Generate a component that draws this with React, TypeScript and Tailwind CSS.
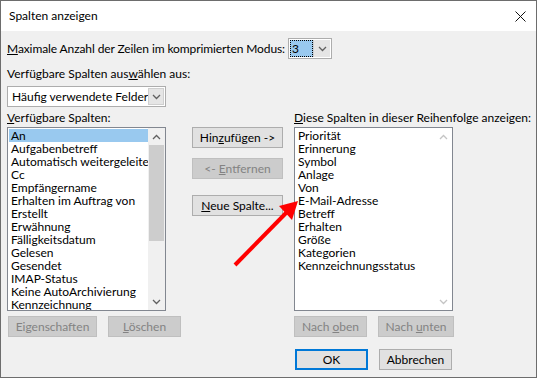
import React from "react";

const font = { fontFamily: 'Lato, "Noto Sans", sans-serif' };

function Chevron({ up = false, color = "#606060" }: { up?: boolean; color?: string }) {
  return (
    <svg width="9" height="6" viewBox="0 0 9 6">
      <path
        d={up ? "M1 5 L4.5 1.5 L8 5" : "M1 1 L4.5 4.5 L8 1"}
        fill="none"
        stroke={color}
        strokeWidth="1.3"
      />
    </svg>
  );
}

function Btn({
  children,
  w,
  disabled = false,
  focused = false,
}: {
  children: React.ReactNode;
  w: string;
  disabled?: boolean;
  focused?: boolean;
}) {
  const base = "h-[21px] flex items-center justify-center text-[12px] leading-none";
  const look = disabled
    ? "bg-[#cccccc] border border-[#bfbfbf] text-[#838383]"
    : focused
    ? "bg-[#e1e1e1] border-2 border-[#0078d7] text-black"
    : "bg-[#e1e1e1] border border-[#adadad] text-black";
  return (
    <div className={`${base} ${look} ${w}`}>
      <span className="whitespace-pre">{children}</span>
    </div>
  );
}

const leftItems = [
  "An",
  "Aufgabenbetreff",
  "Automatisch weitergeleitet",
  "Cc",
  "Empfängername",
  "Erhalten im Auftrag von",
  "Erstellt",
  "Erwähnung",
  "Fälligkeitsdatum",
  "Gelesen",
  "Gesendet",
  "IMAP-Status",
  "Keine AutoArchivierung",
  "Kennzeichnung",
];

const rightItems = [
  "Priorität",
  "Erinnerung",
  "Symbol",
  "Anlage",
  "Von",
  "E-Mail-Adresse",
  "Betreff",
  "Erhalten",
  "Größe",
  "Kategorien",
  "Kennzeichnungsstatus",
];

export default function App() {
  return (
    <div className="w-[537px] h-[379px] overflow-hidden">
      <div
        className="relative w-[537px] h-[378px] border border-[#6d6d6d] bg-[#f0f0f0] text-black"
        style={font}
      >
        {/* title bar */}
        <div className="h-[30px] bg-white flex items-center justify-between pl-[8px] pr-[10px]">
          <span className="text-[12px]">Spalten anzeigen</span>
          <svg width="11" height="11" viewBox="0 0 11 11">
            <path d="M0.5 0.5 L10.5 10.5 M10.5 0.5 L0.5 10.5" stroke="#111" strokeWidth="1" />
          </svg>
        </div>

        <div className="pl-[6px] text-[12px]">
          {/* row 1 */}
          <div className="mt-[7px] h-[21px] flex items-center">
            <span className="whitespace-nowrap mr-[3px] tracking-[-0.1px]">
              <u>M</u>aximale Anzahl der Zeilen im komprimierten Modus:
            </span>
            <div className="h-[21px] w-[44px] border border-[#adadad] bg-white flex items-stretch p-[1px]">
              <div className="flex-1 bg-[#99c9ef] border border-dotted border-black flex items-center pl-[1px] leading-none">
                3
              </div>
              <div className="w-[17px] bg-[#e5e5e5] border-l border-[#cfcfcf] flex items-center justify-center">
                <Chevron />
              </div>
            </div>
          </div>

          {/* row 2 */}
          <div className="mt-[7px] h-[15px] leading-[15px]">
            Verfügbare Spalten aus<u>w</u>ählen aus:
          </div>

          {/* row 3 */}
          <div className="mt-[5px] h-[21px] w-[159px] border border-[#adadad] bg-white flex items-stretch p-[1px]">
            <div className="flex-1 flex items-center pl-[3px] leading-none whitespace-nowrap">
              Häufig verwendete Felder
            </div>
            <div className="w-[17px] bg-[#e5e5e5] border border-[#cfcfcf] flex items-center justify-center">
              <Chevron />
            </div>
          </div>

          {/* lists */}
          <div className="mt-[3px] flex">
            <div className="w-[159px]">
              <div className="h-[15px] leading-[15px] whitespace-nowrap">
                <u>V</u>erfügbare Spalten:
              </div>
              <div className="mt-[2px] h-[184px] border border-[#828790] bg-white flex">
                <div className="flex-1 pt-[1px] pl-[1px] overflow-hidden">
                  {leftItems.map((it, i) => (
                    <div
                      key={it}
                      className={`h-[13px] leading-[13px] pl-[2px] whitespace-nowrap ${
                        i === 0 ? "bg-[#99c9ef]" : ""
                      }`}
                    >
                      {it}
                    </div>
                  ))}
                </div>
                <div className="w-[17px] bg-[#f0f0f0] flex flex-col items-center">
                  <div className="h-[17px] flex items-center justify-center">
                    <Chevron up />
                  </div>
                  <div className="w-[15px] h-[96px] bg-[#cdcdcd]" />
                  <div className="flex-1" />
                  <div className="h-[17px] flex items-center justify-center">
                    <Chevron />
                  </div>
                </div>
              </div>
            </div>

            <div className="ml-[26px] w-[91px] pt-[17px] flex flex-col">
              <Btn w="w-[91px]">
                Hin<u>z</u>ufügen -&gt;
              </Btn>
              <div className="mt-[10px]">
                <Btn w="w-[91px]" disabled>
                  &lt;- <u>E</u>ntfernen
                </Btn>
              </div>
              <div className="mt-[16px]">
                <Btn w="w-[91px]">
                  <u>N</u>eue Spalte...
                </Btn>
              </div>
            </div>

            <div className="ml-[11px] w-[159px]">
              <div className="h-[15px] leading-[15px] whitespace-nowrap">
                <u>D</u>iese Spalten in dieser Reihenfolge anzeigen:
              </div>
              <div className="mt-[2px] h-[184px] border border-[#828790] bg-white flex">
                <div className="flex-1 pt-[1px] pl-[1px] overflow-hidden">
                  {rightItems.map((it) => (
                    <div key={it} className="h-[13px] leading-[13px] pl-[2px] whitespace-nowrap">
                      {it}
                    </div>
                  ))}
                </div>
                <div className="w-[17px] bg-white flex flex-col items-center justify-between">
                  <div className="h-[17px] flex items-center justify-center">
                    <Chevron up color="#c4c4c4" />
                  </div>
                  <div className="h-[17px] flex items-center justify-center">
                    <Chevron color="#c4c4c4" />
                  </div>
                </div>
              </div>
            </div>
          </div>

          {/* buttons under lists */}
          <div className="mt-[5px] flex">
            <div className="ml-[1px]">
              <Btn w="w-[89px]" disabled>
                Ei<u>g</u>enschaften
              </Btn>
            </div>
            <div className="ml-[11px]">
              <Btn w="w-[73px]" disabled>
                <u>L</u>öschen
              </Btn>
            </div>
            <div className="ml-[113px]">
              <Btn w="w-[73px]" disabled>
                Nach <u>o</u>ben
              </Btn>
            </div>
            <div className="ml-[11px]">
              <Btn w="w-[76px]" disabled>
                Nach <u>u</u>nten
              </Btn>
            </div>
          </div>

          <div className="mt-[12px] flex pl-[288px]">
            <Btn w="w-[73px]" focused>
              OK
            </Btn>
            <div className="ml-[11px]">
              <Btn w="w-[73px]">Abbrechen</Btn>
            </div>
          </div>
        </div>

        {/* red annotation arrow */}
        <svg
          className="absolute left-0 top-0 pointer-events-none"
          width="537"
          height="379"
          viewBox="0 0 537 379"
        >
          <line x1="234" y1="264" x2="286" y2="211" stroke="#ff0000" strokeWidth="4" />
          <polygon points="297,200 278,205 291,219" fill="#ff0000" />
        </svg>
      </div>
    </div>
  );
}
